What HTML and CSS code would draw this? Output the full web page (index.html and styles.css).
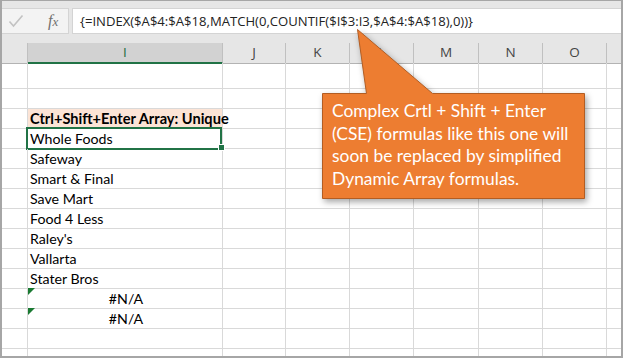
FILE: index.html
```html
<!DOCTYPE html>
<html lang="en">
<head>
    <meta charset="UTF-8">
    <meta name="viewport" content="width=device-width, initial-scale=1.0">
    <title>CSE Array Formula</title>
    <link rel="stylesheet" href="styles.css">
</head>
<body>
    <div class="sheet">
        <div class="formula-bar">
            <div class="name-box">
                <svg class="check" width="16" height="14" viewBox="0 0 16 14">
                    <path d="M1.5 7.5 L5.5 12 L14.5 1.5" fill="none" stroke="#c2c2c2" stroke-width="1.6"/>
                </svg>
                <span class="fx">f<span class="fx-x">x</span></span>
            </div>
            <div class="formula">{=INDEX($A$4:$A$18,MATCH(0,COUNTIF($I$3:I3,$A$4:$A$18),0))}</div>
        </div>

        <div class="grid">
            <div class="row head">
                <div class="c"></div><div class="c sel">I</div><div class="c">J</div><div class="c">K</div><div class="c">L</div><div class="c">M</div><div class="c">N</div><div class="c">O</div><div class="c"></div>
            </div>
            <div class="row tall">
                <div class="c"></div><div class="c"></div><div class="c"></div><div class="c"></div><div class="c"></div><div class="c"></div><div class="c"></div><div class="c"></div><div class="c"></div>
            </div>
            <div class="row">
                <div class="c"></div><div class="c"></div><div class="c"></div><div class="c"></div><div class="c"></div><div class="c"></div><div class="c"></div><div class="c"></div><div class="c"></div>
            </div>
            <div class="row">
                <div class="c"></div><div class="c title">Ctrl+Shift+Enter Array: Unique</div><div class="c"></div><div class="c"></div><div class="c"></div><div class="c"></div><div class="c"></div><div class="c"></div><div class="c"></div>
            </div>
            <div class="row">
                <div class="c"></div><div class="c active">Whole Foods<span class="handle"></span></div><div class="c"></div><div class="c"></div><div class="c"></div><div class="c"></div><div class="c"></div><div class="c"></div><div class="c"></div>
            </div>
            <div class="row">
                <div class="c"></div><div class="c">Safeway</div><div class="c"></div><div class="c"></div><div class="c"></div><div class="c"></div><div class="c"></div><div class="c"></div><div class="c"></div>
            </div>
            <div class="row">
                <div class="c"></div><div class="c">Smart &amp; Final</div><div class="c"></div><div class="c"></div><div class="c"></div><div class="c"></div><div class="c"></div><div class="c"></div><div class="c"></div>
            </div>
            <div class="row">
                <div class="c"></div><div class="c">Save Mart</div><div class="c"></div><div class="c"></div><div class="c"></div><div class="c"></div><div class="c"></div><div class="c"></div><div class="c"></div>
            </div>
            <div class="row">
                <div class="c"></div><div class="c">Food 4 Less</div><div class="c"></div><div class="c"></div><div class="c"></div><div class="c"></div><div class="c"></div><div class="c"></div><div class="c"></div>
            </div>
            <div class="row">
                <div class="c"></div><div class="c">Raley's</div><div class="c"></div><div class="c"></div><div class="c"></div><div class="c"></div><div class="c"></div><div class="c"></div><div class="c"></div>
            </div>
            <div class="row">
                <div class="c"></div><div class="c">Vallarta</div><div class="c"></div><div class="c"></div><div class="c"></div><div class="c"></div><div class="c"></div><div class="c"></div><div class="c"></div>
            </div>
            <div class="row">
                <div class="c"></div><div class="c">Stater Bros</div><div class="c"></div><div class="c"></div><div class="c"></div><div class="c"></div><div class="c"></div><div class="c"></div><div class="c"></div>
            </div>
            <div class="row">
                <div class="c"></div><div class="c err">#N/A</div><div class="c"></div><div class="c"></div><div class="c"></div><div class="c"></div><div class="c"></div><div class="c"></div><div class="c"></div>
            </div>
            <div class="row">
                <div class="c"></div><div class="c err">#N/A</div><div class="c"></div><div class="c"></div><div class="c"></div><div class="c"></div><div class="c"></div><div class="c"></div><div class="c"></div>
            </div>
            <div class="row">
                <div class="c"></div><div class="c"></div><div class="c"></div><div class="c"></div><div class="c"></div><div class="c"></div><div class="c"></div><div class="c"></div><div class="c"></div>
            </div>
            <div class="row">
                <div class="c"></div><div class="c"></div><div class="c"></div><div class="c"></div><div class="c"></div><div class="c"></div><div class="c"></div><div class="c"></div><div class="c"></div>
            </div>
        </div>

        <!-- callout over the sheet -->
        <div class="callout">
            <svg class="callout-shape" width="280" height="184" viewBox="0 0 280 184">
                <polygon points="6.5,67.5 50.5,67.5 41.5,3.5 116.5,67.5 268.5,67.5 268.5,172.5 6.5,172.5" fill="#ed7d31" stroke="#b25d23" stroke-width="1"/>
            </svg>
            <p class="callout-text">Complex Crtl + Shift + Enter<br>(CSE) formulas like this one will<br>soon be replaced by simplified<br>Dynamic Array formulas.</p>
        </div>
    </div>
</body>
</html>
```

FILE: styles.css
```css
body {
    margin: 0;
    background: #fff;
    font-family: Lato, "Liberation Sans", sans-serif;
}

.sheet {
    position: relative;
    width: 623px;
    height: 358px;
    box-sizing: border-box;
    border: 1px solid #a6a6a6;
    border-width: 1px 2px 2px 2px;
    background: #fff;
    overflow: hidden;
}

/* formula bar */
.formula-bar {
    display: flex;
    height: 42px;
    box-sizing: border-box;
    padding-top: 7px;
    padding-bottom: 9px;
    background: #e6e6e6;
    gap: 3px;
}
.name-box {
    width: 67px;
    box-sizing: border-box;
    display: flex;
    align-items: center;
    background: #f3f3f3;
    border: 1px solid #d4d4d4;
    border-left: none;
}
.check {
    margin-left: 6px;
}
.fx {
    margin-left: 24px;
    font-family: "Liberation Serif", serif;
    font-style: italic;
    font-size: 16px;
    color: #707070;
}
.fx-x {
    font-size: 13px;
}
.formula {
    flex: 1;
    background: #fff;
    border: 1px solid #d4d4d4;
    border-right: none;
    padding-left: 7px;
    font-family: "Open Sans", sans-serif;
    font-size: 13.1px;
    line-height: 24px;
    color: #222;
    white-space: nowrap;
}

/* worksheet grid */
.row {
    display: grid;
    grid-template-columns: 26px 195px 63px 64px 64px 65px 64px 64px 1fr;
    height: 20px;
}
.row.tall {
    height: 26px;
}
.c {
    box-sizing: border-box;
    border-right: 1px solid #d9d9d9;
    border-bottom: 1px solid #d9d9d9;
    padding-left: 2px;
    font-size: 14.2px;
    line-height: 19px;
    color: #000;
    white-space: nowrap;
    position: relative;
}
.c:last-child {
    border-right: none;
}

.head .c {
    background: #e6e6e6;
    border-right-color: #c0c0c0;
    border-bottom-color: #b3b3b3;
    padding-left: 0;
    text-align: center;
    font-family: "Open Sans", sans-serif;
    font-size: 13.5px;
    line-height: 19px;
    color: #444;
}
.head .c.sel {
    background: #d2d2d2;
    color: #1e6b40;
    border-bottom: 2px solid #217346;
}

.title {
    background: #fce4d6;
    font-weight: bold;
    font-size: 14.6px;
}

.active::after {
    content: "";
    position: absolute;
    top: -2px;
    left: -2px;
    right: 0;
    bottom: -2px;
    border: 2px solid #217346;
}
.handle {
    position: absolute;
    left: 190px;
    top: 15px;
    width: 5px;
    height: 5px;
    background: #217346;
    border: 1px solid #fff;
    z-index: 2;
}

.err {
    text-align: center;
}
.err::before {
    content: "";
    position: absolute;
    top: -1px;
    left: 0;
    border-top: 7px solid #1a7a32;
    border-right: 7px solid transparent;
}

/* callout */
.callout {
    position: absolute;
    left: 314px;
    top: 25px;
    width: 280px;
    height: 184px;
}
.callout-shape {
    display: block;
    filter: drop-shadow(2px 3px 3px rgba(0, 0, 0, 0.35));
}
.callout-text {
    position: absolute;
    left: 16px;
    top: 74px;
    margin: 0;
    font-size: 17.4px;
    line-height: 22.6px;
    color: #fff;
    white-space: nowrap;
}
```
